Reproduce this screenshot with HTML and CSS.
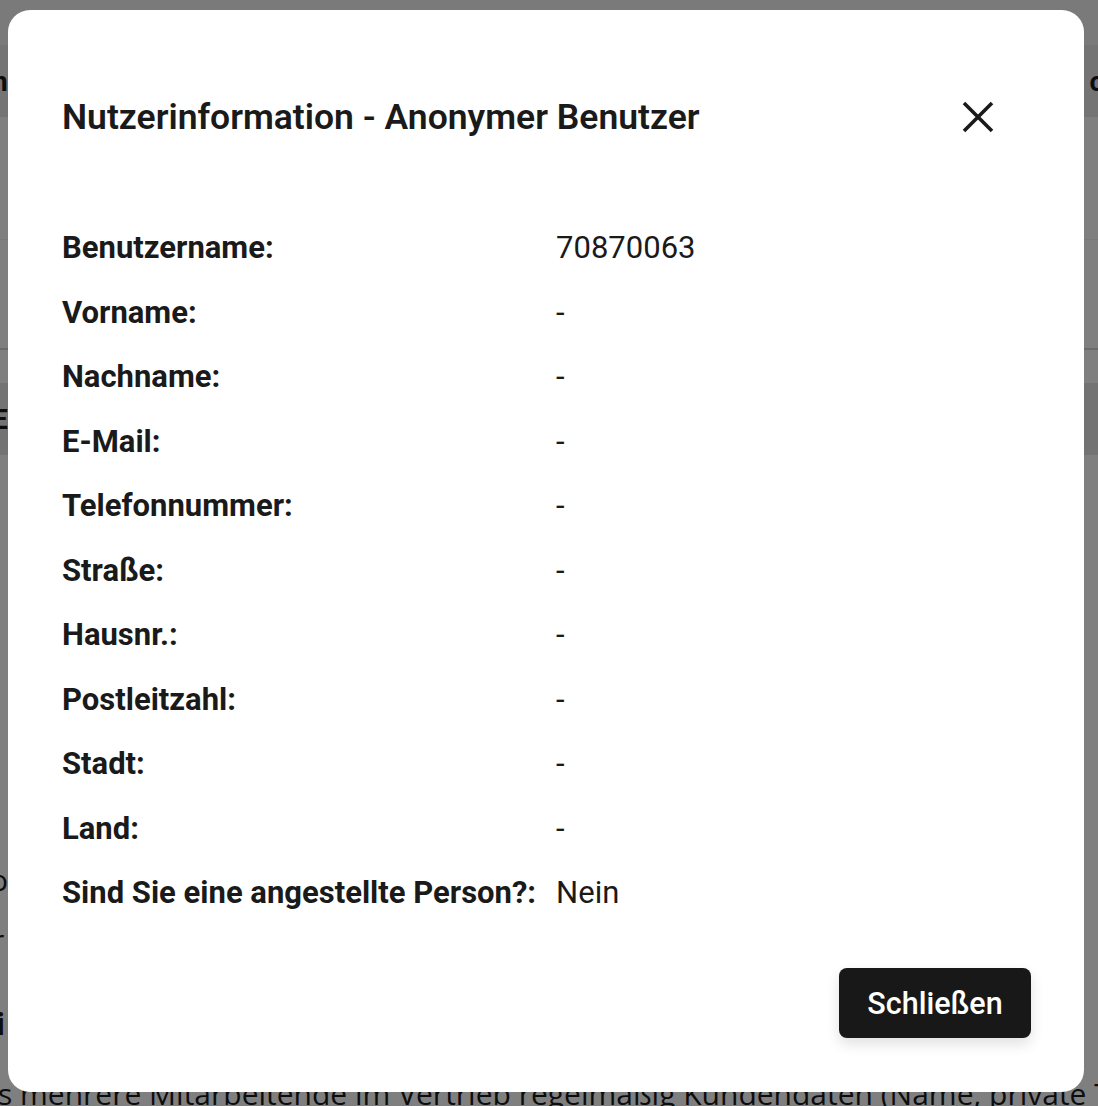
FILE: index.html
```html
<!DOCTYPE html>
<html>

<head>
    <meta charset="UTF-8" />
    <title>Nutzerinformation</title>
    <link rel="stylesheet" href="styles.css">
</head>

<body>
    <div class="page">
        <div class="topbar"></div>
        <div class="table">
            <div class="table-head"><span class="cut-left">n</span><span class="cut-right">c</span></div>
            <div class="table-row"></div>
            <div class="table-row tall"></div>
            <div class="table-sub"><span class="cut-left">E</span></div>
        </div>
        <div class="text">
            <p class="line-a">o</p>
            <p class="line-b">r</p>
            <p class="line-c">i</p>
            <p class="line-d">s mehrere Mitarbeitende im Vertrieb regelmäßig Kundendaten (Name, private Tel</p>
        </div>
    </div>

    <div class="overlay"></div>

    <div class="modal">
        <div class="modal-header">
            <h2>Nutzerinformation - Anonymer Benutzer</h2>
            <button class="close-btn" aria-label="Schließen">
                <svg width="34" height="34" viewBox="0 0 34 34">
                    <path d="M3 3 L31 31 M31 3 L3 31" stroke="#1a1a1a" stroke-width="3.6" fill="none" />
                </svg>
            </button>
        </div>

        <div class="info">
            <div class="label">Benutzername:</div>
            <div class="value">70870063</div>
            <div class="label">Vorname:</div>
            <div class="value">-</div>
            <div class="label">Nachname:</div>
            <div class="value">-</div>
            <div class="label">E-Mail:</div>
            <div class="value">-</div>
            <div class="label">Telefonnummer:</div>
            <div class="value">-</div>
            <div class="label">Straße:</div>
            <div class="value">-</div>
            <div class="label">Hausnr.:</div>
            <div class="value">-</div>
            <div class="label">Postleitzahl:</div>
            <div class="value">-</div>
            <div class="label">Stadt:</div>
            <div class="value">-</div>
            <div class="label">Land:</div>
            <div class="value">-</div>
            <div class="label">Sind Sie eine angestellte Person?:</div>
            <div class="value">Nein</div>
        </div>

        <div class="modal-footer">
            <button class="btn">Schließen</button>
        </div>
    </div>
</body>

</html>
```

FILE: styles.css
```css
* {
    box-sizing: border-box;
}

body {
    margin: 0;
    background: #fff;
    font-family: Roboto, "Noto Sans", Arial, sans-serif;
    color: #1a1a1a;
    overflow: hidden;
}

/* page behind the dialog */
.page {
    height: 1106px;
    overflow: hidden;
    font-family: "Open Sans", Arial, sans-serif;
}

.topbar {
    height: 45px;
    background: #f4f4f4;
}

.table-head {
    height: 72px;
    background: #e8e8e8;
    display: flex;
    justify-content: space-between;
    align-items: center;
    font-size: 28px;
    font-weight: 700;
    font-family: Roboto, Arial, sans-serif;
    overflow: hidden;
}

.cut-left {
    margin-left: -8px;
}

.cut-right {
    margin-right: -6px;
}

.table-row {
    height: 123px;
    border-bottom: 1px solid #f2f2f2;
}

.table-row.tall {
    height: 110px;
    border-bottom: 2px solid #d6d6d6;
}

.table-sub {
    margin-top: 33px;
    height: 72px;
    background: #e6e6e6;
    display: flex;
    align-items: center;
    font-size: 28px;
    font-weight: 700;
    font-family: Roboto, Arial, sans-serif;
    overflow: hidden;
}

.text {
    overflow: hidden;
}

.text p {
    margin: 0;
    font-size: 30px;
    line-height: 40px;
}

.text .line-a {
    margin-top: 405px;
    margin-left: -10px;
}

.text .line-b {
    margin-top: 20px;
    margin-left: -8px;
}

.text .line-c {
    margin-top: 44px;
    margin-left: -4px;
    font-weight: 700;
}

.text .line-d {
    margin-top: 30px;
    margin-left: -2px;
    white-space: nowrap;
}

.overlay {
    position: fixed;
    inset: 0;
    background: rgba(0, 0, 0, 0.5);
}

/* dialog */
.modal {
    position: fixed;
    left: 8px;
    top: 10px;
    width: 1076px;
    height: 1082px;
    background: #fff;
    border-radius: 22px;
    padding: 54px 53px 54px 54px;
    display: flex;
    flex-direction: column;
}

.modal-header {
    display: flex;
    justify-content: space-between;
    align-items: center;
    height: 106px;
    padding-right: 36px;
}

.modal-header h2 {
    margin: 0;
    font-size: 35.5px;
    font-weight: 600;
    color: #1a1a1a;
}

.close-btn {
    background: none;
    border: none;
    padding: 0;
    cursor: pointer;
    display: flex;
}

.info {
    margin-top: 46px;
    display: grid;
    grid-template-columns: auto 1fr;
    column-gap: 20px;
}

.label,
.value {
    height: 64.5px;
    line-height: 64.5px;
    font-size: 31px;
}

.label {
    font-weight: 700;
}

.modal-footer {
    margin-top: auto;
    display: flex;
    justify-content: flex-end;
}

.btn {
    width: 192px;
    height: 70px;
    background: #181818;
    color: #fff;
    border: none;
    border-radius: 8px;
    font-family: Roboto, Arial, sans-serif;
    font-size: 30.5px;
    font-weight: 500;
    box-shadow: 0 6px 14px rgba(0, 0, 0, 0.12);
    cursor: pointer;
}
```
